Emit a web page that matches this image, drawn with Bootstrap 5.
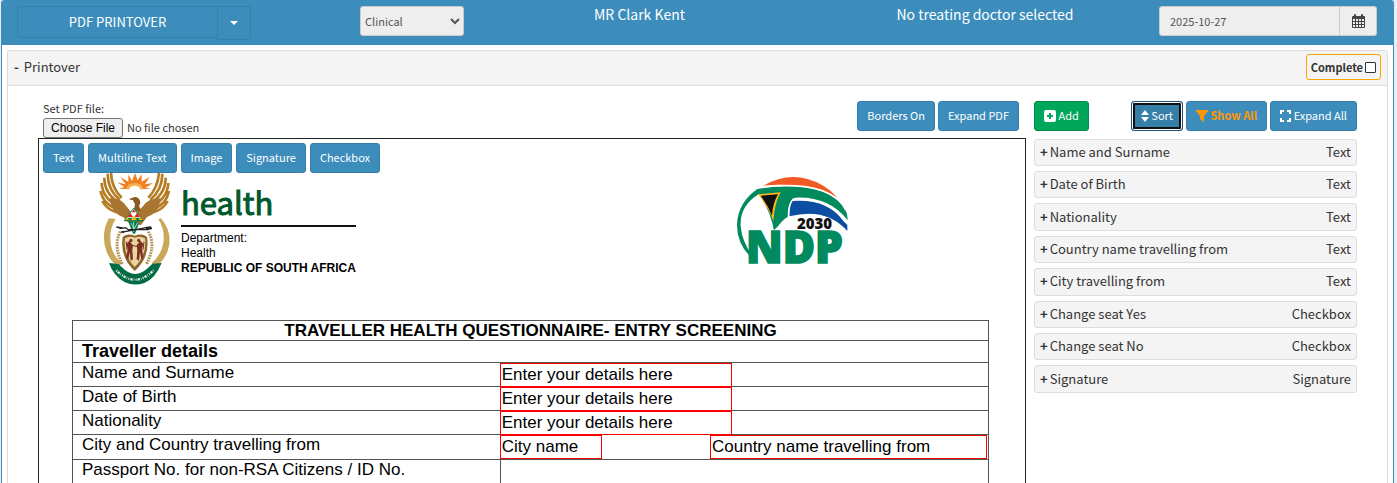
<!DOCTYPE html>
<html lang="en">
<head>
    <meta charset="UTF-8">
    <meta name="viewport" content="width=device-width, initial-scale=1.0">
    <title>PDF Printover</title>
    <link href="https://cdn.jsdelivr.net/npm/bootstrap@5.3.0/dist/css/bootstrap.min.css" rel="stylesheet">
    <style>
        body { font-family: "Noto Sans CJK SC", "Noto Sans", sans-serif; font-size: 13px; line-height: 20px; color: #333; background: #ecedf0; }
        .page-box { margin: 0 3px 0 1px; border: 1px solid #3c8dbc; border-width: 0 1px; border-radius: 3px 3px 0 0; background: #fff; }
        .top-bar { display: grid; grid-template-columns: 339fr 104fr 343fr 340fr 218fr; gap: 4px; padding: 6px 16px 5px 15px; background: #3c8dbc; color: #fff; height: 45px; }
        .top-title { font-size: 14px; line-height: 16px; }
        .btn { --bs-btn-font-size: 11px; --bs-btn-line-height: 18px; --bs-btn-padding-x: 9px; --bs-btn-padding-y: 5px; --bs-btn-border-radius: 3px; padding-top: 4px; padding-bottom: 6px; }
        .btn svg { vertical-align: -2px; }
        .btn-blue { --bs-btn-color: #fff; --bs-btn-bg: #3c8dbc; --bs-btn-border-color: #367fa9; --bs-btn-hover-color: #fff; --bs-btn-hover-bg: #367fa9; }
        .btn-green { --bs-btn-color: #fff; --bs-btn-bg: #00a65a; --bs-btn-border-color: #008d4c; --bs-btn-hover-color: #fff; --bs-btn-hover-bg: #008d4c; }
        .btn-sorting { background: #367fa9; border-color: #204d74; box-shadow: inset 0 0 0 1px #fff, inset 0 0 0 3px #101010; }
        .btn-showall { color: #ff9800; font-weight: 700; }
        .btn-main { width: 201px; height: 32px; padding-top: 5px; font-size: 13px; }
        .btn-caret { width: 34px; height: 34px; padding: 0; margin-left: -1px; font-size: 14px; }
        .top-field { height: 30px; font-size: 11px; line-height: 18px; color: #555; background: #eee; border: 1px solid #ccc; border-radius: 3px; }
        .top-field.form-control { padding: 5px 10px; border-radius: 3px 0 0 3px; background: #eee; color: #555; font-size: 11px; }
        .cal-btn { flex: none; width: 37px; height: 30px; padding: 0; background: #eee; border: 1px solid #ccc; border-left: 0; border-radius: 0 3px 3px 0; color: #444; }
        .panel-box { margin: 5px 5px 0; border: 1px solid #ddd; border-bottom: 0; border-radius: 3px 3px 0 0; }
        .panel-head { height: 35px; padding: 0 6px 1px; background: #f4f4f4; border-bottom: 1px solid #ddd; }
        .panel-head b { margin-right: 5px; }
        .complete-box { height: 26px; padding: 0 4px; gap: 2px; border: 1px solid #ffa500; border-radius: 3px; font-size: 11px; font-weight: 700; }
        .complete-box input { appearance: none; width: 11px; height: 11px; margin: 0; border: 1px solid #333; border-radius: 1px; background: #fff; }
        .work-area { display: grid; grid-template-columns: 988fr 323fr; gap: 8px; padding: 15px 30px 0; min-height: 0; }
        .file-area { padding-left: 5px; }
        .file-label { font-size: 11px; line-height: 15px; margin-bottom: 2px; }
        .file-pick { display: block; height: 20px; font-size: 11px; line-height: 18px; }
        .file-pick::file-selector-button { height: 20px; padding: 0 7px; margin-right: 4px; font: 12px/16px "Liberation Sans", sans-serif; border: 1px solid #767676; border-radius: 3px; background: #efefef; color: #000; }
        .view-tools { gap: 3px; padding-right: 7px; }
        .right-tools { gap: 3px; }
        .pdf-sheet { border: 1px solid #222; border-bottom: 0; font-family: "Liberation Sans", Arial, sans-serif; color: #000; min-height: 0; overflow: hidden; }
        .pdf-tools { padding: 4px 4px 0; gap: 4px; font-family: "Noto Sans CJK SC", sans-serif; }
        .pdf-logos { padding: 0 177px 0 60px; height: 147px; }
        .dept-text { width: 175px; margin-left: 10px; font-size: 12px; line-height: 15px; padding-top: 7px; white-space: nowrap; }
        .dept-name { font-family: "Noto Sans CJK SC", sans-serif; font-size: 31px; line-height: 44px; color: #00592d; -webkit-text-stroke: 1px #00592d; }
        .dept-rule { border-top: 2px solid #111; margin: 1px 0 4px; }
        .form-grid { width: calc(100% - 69px); margin: 0 36px 0 33px; border-collapse: collapse; table-layout: fixed; font-size: 17px; line-height: 20px; }
        .form-grid td, .form-grid th { border: 1px solid #555; padding: 0 9px; vertical-align: top; }
        .form-grid .row-title th { line-height: 19px; }
        .form-grid .row-sub th { font-size: 18px; line-height: 21px; }
        .form-grid tr:last-child td { padding-bottom: 6px; }
        .label-col { width: 46.7%; }
        .form-grid .field-cell { padding: 0; }
        .pdf-field { display: block; position: relative; width: 232px; height: 24px; margin: 0 0 -1px -1px; padding: 0 1px; border: 1px solid red; background: #fff; color: #000; font-size: 17px; line-height: 20px; border-radius: 0; }
        .field-city { width: 102px; margin-bottom: 0; }
        .field-country { width: 277px; margin-right: 1px; }
        .field-list { display: grid; gap: 5px; height: 254px; margin: 8px 0 0; padding: 0; list-style: none; }
        .field-list li { display: flex; justify-content: space-between; align-items: center; padding: 0 5px 1px; background: #f4f4f4; border: 1px solid #ddd; border-radius: 3px; }
        .field-list b { margin-right: 2px; }
        svg { flex: none; }
    </style>
</head>
<body>
<div class="page-box vh-100 d-flex flex-column overflow-hidden">
    <header class="top-bar">
        <div class="d-flex align-items-start">
            <button type="button" class="btn btn-blue btn-main rounded-end-0">PDF PRINTOVER</button>
            <button type="button" class="btn btn-blue btn-caret dropdown-toggle rounded-start-0" aria-label="More"></button>
        </div>
        <select class="top-field w-100" aria-label="Type"><option>Clinical</option></select>
        <div class="top-title text-center">MR Clark Kent</div>
        <div class="top-title text-center">No treating doctor selected</div>
        <div class="d-flex">
            <input type="text" class="form-control top-field" value="2025-10-27" aria-label="Date">
            <button type="button" class="cal-btn d-flex align-items-center justify-content-center" aria-label="Calendar">
                <svg width="13" height="14" viewBox="0 0 13 14"><path fill="currentColor" fill-rule="evenodd" d="M1 2h1V1q0-1 1-1t1 1v1h5V1q0-1 1-1t1 1v1h1q1 0 1 1v10q0 1-1 1H1q-1 0-1-1V3q0-1 1-1zM1 5v2h2V5zm3 0v2h2V5zm3 0v2h2V5zm3 0v2h2V5zM1 8v2h2V8zm3 0v2h2V8zm3 0v2h2V8zm3 0v2h2V8zM1 11v2h2v-2zm3 0v2h2v-2zm3 0v2h2v-2zm3 0v2h2v-2z"/></svg>
            </button>
        </div>
    </header>

    <section class="panel-box d-flex flex-column flex-fill overflow-hidden">
        <div class="panel-head d-flex align-items-center justify-content-between">
            <div><b>-</b>Printover</div>
            <label class="complete-box d-flex align-items-center">Complete<input type="checkbox"></label>
        </div>

        <div class="work-area flex-fill">
            <div class="d-flex flex-column overflow-hidden">
                <div class="d-flex justify-content-between">
                    <div class="file-area">
                        <label class="file-label d-block" for="pdfFile">Set PDF file:</label>
                        <input type="file" id="pdfFile" class="file-pick">
                    </div>
                    <div class="view-tools d-flex align-items-start">
                        <button type="button" class="btn btn-blue">Borders On</button>
                        <button type="button" class="btn btn-blue">Expand PDF</button>
                    </div>
                </div>
                <div class="pdf-sheet flex-fill">
                    <div class="pdf-tools d-flex">
                        <button type="button" class="btn btn-blue">Text</button>
                        <button type="button" class="btn btn-blue">Multiline Text</button>
                        <button type="button" class="btn btn-blue">Image</button>
                        <button type="button" class="btn btn-blue">Signature</button>
                        <button type="button" class="btn btn-blue">Checkbox</button>
                    </div>
                    <div class="pdf-logos d-flex align-items-start">
                        <!-- coat of arms -->
                        <svg width="72" height="112" viewBox="24 24 216 336">
                            <g fill="#c9a85c">
                                <path d="M54 160Q28 205 46 258Q58 290 82 306L92 294Q60 268 58 224Q56 190 74 162zM210 160Q248 205 230 258Q218 290 190 308L182 294Q214 268 218 224Q220 190 202 162z"/>
                            </g>
                            <g fill="none" stroke="#b57c22" stroke-width="8">
                                <path d="M60 24Q62 70 92 98M50 26Q50 74 86 104M40 38Q40 84 82 112M32 54Q34 98 78 122M28 78Q38 118 76 132M34 108Q46 132 76 142M204 24Q200 70 172 98M214 26Q214 74 178 104M224 38Q224 84 182 112M232 54Q230 98 186 122M234 78Q226 118 188 132M230 108Q218 132 188 142"/>
                            </g>
                            <path fill="#a87630" d="M56 100Q90 96 108 126L128 150L156 124Q170 100 208 100Q206 144 168 156L150 180L116 176L96 156Q62 146 56 100z"/>
                            <path fill="#ee7f22" d="M78 52L104 58L88 36L112 50L112 28L123 48L132 24L140 46L152 28L152 50L176 36L162 58L186 54L164 68L180 72H150Q148 60 132 60Q114 60 112 72H84L100 66z"/>
                            <path fill="#f9b050" d="M106 72Q108 54 131 54Q154 54 156 72L148 74Q146 62 131 62Q116 62 114 74z"/>
                            <path fill="#8a5a22" d="M114 102L124 98Q138 92 144 102Q152 112 144 122L150 138L128 140L132 116Q124 104 114 102z"/>
                            <path fill="#fff" d="M118 108l8-4 2 8-4 6z"/>
                            <path fill="#007a4d" d="M128 128L158 168L128 170L98 168z"/>
                            <path fill="#fff" d="M128 132l20 26H108z"/>
                            <path fill="#e2231a" d="M118 144l8 12H110zM138 144l8 12H130zM128 134l6 8H122z"/>
                            <path fill="#ffb612" d="M118 166l10-12 10 12zM102 164l6-8 7 9zM142 165l6-8 7 8z"/>
                            <path fill="#007a4d" d="M112 170H146L132 206H126z"/>
                            <path stroke="#fff" stroke-width="2" d="M120 174l10 20M140 172l-12 24M128 170v30"/>
                            <path fill="none" stroke="#222" stroke-width="4" d="M76 186Q90 192 104 188L112 194H172M90 202L166 188"/>
                            <path fill="#222" d="M74 184l22 3-5 6zM162 186l18-2 4 8-16 4zM88 200l12-3-2 8z"/>
                            <g fill="none" stroke="#b08b45" stroke-width="9" stroke-dasharray="5 3"><path d="M88 200Q66 242 94 298M172 200Q196 242 166 298"/></g>
                            <path fill="#8f6529" d="M95 216Q110 204 131 212Q154 204 168 216Q178 276 131 318Q86 276 95 216z"/>
                            <path fill="#e9d3a0" d="M102 220Q116 212 131 218Q148 212 162 220Q168 270 131 306Q96 270 102 220z"/>
                            <path fill="#7c3022" d="M117 222a5 5 0 1 1 1 9l8 10-2 14 2 28-7 4-3-26-4 22-6-4 4-28-4-14 8-8zM146 222a5 5 0 1 0-1 9l-8 10 2 14-2 28 7 4 3-26 4 22 6-4-4-28 4-14-8-8z"/>
                            <path stroke="#7c3022" stroke-width="3" d="M114 240L150 246M108 254l-2-24M156 254l3-24"/>
                            <path fill="#006b45" d="M54 294L82 297L92 306Q132 348 174 306L184 296L212 294Q192 342 160 354Q130 364 102 352Q68 334 54 294z"/>
                            <path fill="none" stroke="#e6eee0" stroke-width="7" stroke-dasharray="3 3 7 3 2 4" d="M76 316Q132 372 188 316"/>
                        </svg>
                        <div class="dept-text">
                            <div class="dept-name">health</div>
                            <div class="dept-rule"></div>
                            <div>Department:</div>
                            <div>Health</div>
                            <div class="fw-bold">REPUBLIC OF SOUTH AFRICA</div>
                        </div>
                        <!-- NDP 2030 -->
                        <svg class="ms-auto mt-1" width="112" height="110" viewBox="48 36 336 330">
                            <path fill="#f15a24" d="M130 62Q220 10 310 62Q334 76 352 98Q300 66 236 64Q190 56 130 62z"/>
                            <path fill="#008a5e" d="M112 72Q240 50 312 82Q384 112 383 166Q328 94 226 98Q206 110 206 154Q190 162 174 184L162 196Q152 142 118 86Q58 122 62 184Q66 236 108 286L116 296Q50 250 51 178Q54 112 112 72z"/>
                            <path fill="#ffb81c" d="M114 88L182 82Q164 112 160 168Q146 128 114 88z"/>
                            <path fill="#111" d="M122 92L174 88Q158 116 156 152Q144 122 122 92z"/>
                            <path fill="#0b4ea2" d="M216 108Q322 100 370 168L382 180V198Q318 126 208 154Q206 124 216 108z"/>
                            <path fill="none" stroke="#fff" stroke-width="5" d="M128 66Q240 54 310 78Q360 98 378 136M206 156Q204 118 220 102Q316 94 384 174"/>
                            <text x="231" y="192" font-family="Open Sans, sans-serif" font-weight="800" font-size="45" fill="#111">2030</text>
                            <text x="78" y="294" font-family="Open Sans, sans-serif" font-weight="800" font-size="132" fill="#008a5e" stroke="#008a5e" stroke-width="5">NDP</text>
                        </svg>
                    </div>

                    <table class="form-grid">
                        <colgroup><col class="label-col"><col></colgroup>
                        <tr class="row-title"><th colspan="2" class="text-center">TRAVELLER HEALTH QUESTIONNAIRE- ENTRY SCREENING</th></tr>
                        <tr class="row-sub"><th colspan="2">Traveller details</th></tr>
                        <tr><td><label for="fName">Name and Surname</label></td><td class="field-cell"><input id="fName" class="pdf-field" value="Enter your details here"></td></tr>
                        <tr><td><label for="fBirth">Date of Birth</label></td><td class="field-cell"><input id="fBirth" class="pdf-field" value="Enter your details here"></td></tr>
                        <tr><td><label for="fNation">Nationality</label></td><td class="field-cell"><input id="fNation" class="pdf-field" value="Enter your details here"></td></tr>
                        <tr><td><label for="fCity">City and Country travelling from</label></td><td class="field-cell"><div class="d-flex justify-content-between"><input id="fCity" class="pdf-field field-city" value="City name"><input class="pdf-field field-country" value="Country name travelling from" aria-label="Country"></div></td></tr>
                        <tr><td>Passport No. for non-RSA Citizens / ID No.</td><td></td></tr>
                    </table>
                </div>
            </div>

            <div>
                <div class="d-flex justify-content-between">
                    <button type="button" class="btn btn-green"><svg width="12" height="12" viewBox="0 0 12 12"><path fill="#fff" fill-rule="evenodd" d="M2 0h8q2 0 2 2v8q0 2-2 2H2q-2 0-2-2V2q0-2 2-2zm3 3v2H3v2h2v2h2V7h2V5H7V3z"/></svg> Add</button>
                    <div class="d-flex right-tools">
                        <button type="button" class="btn btn-blue btn-sorting"><svg width="8" height="12" viewBox="0 0 8 12"><path fill="#fff" d="M4 0l4 5H0zM0 7h8l-4 5z"/></svg> Sort</button>
                        <button type="button" class="btn btn-blue btn-showall"><svg width="12" height="12" viewBox="0 0 12 12"><path fill="currentColor" d="M0 0h12v1L8 6v6L4 9V6L0 1z"/></svg> Show All</button>
                        <button type="button" class="btn btn-blue"><svg width="11" height="12" viewBox="0 0 11 12"><path fill="none" stroke="#fff" stroke-width="2" d="M1 4V1h3M7 1h3v3M1 8v3h3M7 11h3V8"/></svg> Expand All</button>
                    </div>
                </div>
                <ul class="field-list">
                    <li><span><b>+</b>Name and Surname</span><span>Text</span></li>
                    <li><span><b>+</b>Date of Birth</span><span>Text</span></li>
                    <li><span><b>+</b>Nationality</span><span>Text</span></li>
                    <li><span><b>+</b>Country name travelling from</span><span>Text</span></li>
                    <li><span><b>+</b>City travelling from</span><span>Text</span></li>
                    <li><span><b>+</b>Change seat Yes</span><span>Checkbox</span></li>
                    <li><span><b>+</b>Change seat No</span><span>Checkbox</span></li>
                    <li><span><b>+</b>Signature</span><span>Signature</span></li>
                </ul>
            </div>
        </div>
    </section>
</div>
<script src="https://cdn.jsdelivr.net/npm/bootstrap@5.3.0/dist/js/bootstrap.bundle.min.js"></script>
</body>
</html>
